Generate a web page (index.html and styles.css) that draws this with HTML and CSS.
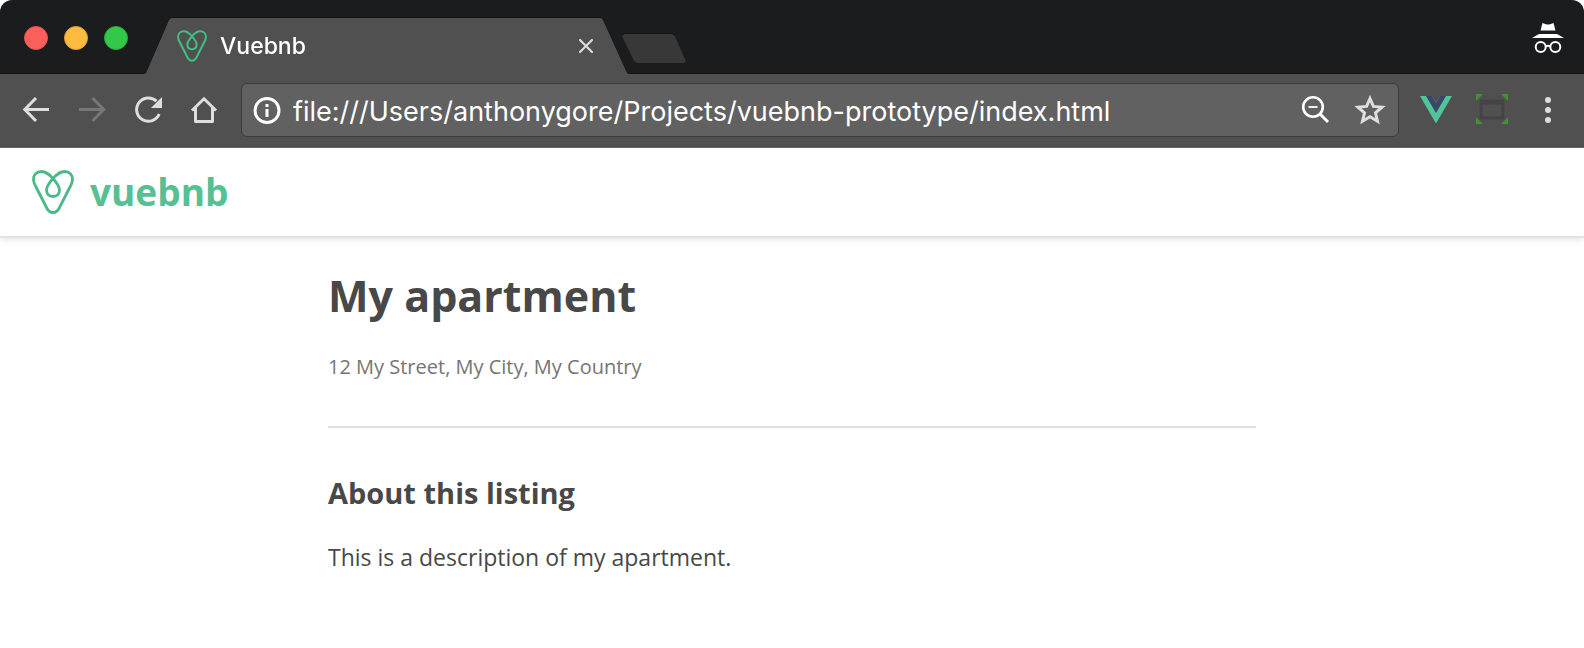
FILE: index.html
```html
<!DOCTYPE html>
<html lang="en">
<head>
<meta charset="utf-8">
<title>Vuebnb</title>
<link rel="stylesheet" href="styles.css">
</head>
<body>
<svg class="symbols" aria-hidden="true">
  <symbol id="heart" viewBox="0 0 42 44">
    <path d="M21 8.500C17 4 13 1.500 9.500 1.500C4.500 1.500 1.500 5 1.500 9.500C1.500 11.500 2 13 3 15L15 38.500C16.500 41.300 18.500 42.500 21 42.500C23.500 42.500 25.500 41.300 27 38.500L39 15C40 13 40.500 11.500 40.500 9.500C40.500 5 37.500 1.500 32.500 1.500C29 1.500 25 4 21 8.500C17 13 14.500 16.500 14.500 20C14.500 24 17 26.500 21 26.500C25 26.500 27.500 24 27.500 20C27.500 16.500 25 13 21 8.500Z" fill="none" stroke="currentColor" stroke-width="2.800"/>
  </symbol>
</svg>
<div class="window">
  <div class="tab-strip">
    <div class="lights">
      <button class="light light-close" aria-label="Close window"></button>
      <button class="light light-min" aria-label="Minimize window"></button>
      <button class="light light-max" aria-label="Maximize window"></button>
    </div>
    <div class="tabs">
      <div class="tab">
        <svg class="favicon" aria-hidden="true"><use href="#heart"/></svg>
        <span class="tab-title">Vuebnb</span>
        <button class="tab-close" aria-label="Close tab">
          <svg width="16" height="16" viewBox="0 0 16 16"><path d="M2 2L14 14M14 2L2 14" stroke="#dcdcdc" stroke-width="2.200" stroke-linecap="round"/></svg>
        </button>
      </div>
      <button class="new-tab" aria-label="New tab"></button>
    </div>
    <svg class="incognito" width="32" height="32" viewBox="0 0 32 32" role="img" aria-label="Incognito">
      <path d="M10.500 1L14 2.300Q16 2.800 18 2.300L21.500 1L23.500 8.500H8.500Z M7 12H25L32 16H0Z" fill="#fff"/>
      <g fill="none" stroke="#fff" stroke-width="2"><circle cx="8.700" cy="25" r="5"/><circle cx="23.300" cy="25" r="5"/><path d="M13.500 24.500Q16 22.800 18.500 24.500"/></g>
    </svg>
  </div>
  <div class="toolbar">
    <div class="nav">
      <button class="tool" aria-label="Back"><svg viewBox="0 0 32 32"><path d="M16 4L4.800 15.500L16 27M5 15.500H29"/></svg></button>
      <button class="tool tool-off" aria-label="Forward" disabled><svg viewBox="0 0 32 32"><path d="M16.500 4L27.700 15.500L16.500 27M27 15.500H3"/></svg></button>
      <button class="tool" aria-label="Reload"><svg viewBox="0 0 32 32"><path d="M24.500 7.200A11.700 11.700 0 1 0 27.200 20"/><path class="solid" d="M30 3V14H19Z"/></svg></button>
      <button class="tool" aria-label="Home"><svg viewBox="0 0 32 32"><path d="M4 16.500L16 4.800L28 16.500"/><path d="M7.500 14V27.500H24.500V14" stroke-linejoin="round"/></svg></button>
    </div>
    <div class="address">
      <svg class="info" width="28" height="28" viewBox="0 0 28 28" aria-hidden="true"><circle cx="14" cy="14.500" r="12" fill="none" stroke="#fff" stroke-width="3"/><path d="M12.500 8h3v3h-3zM12.500 13h3v8h-3z" fill="#fff"/></svg>
      <input class="url" type="text" aria-label="Address" value="file:///Users/anthonygore/Projects/vuebnb-prototype/index.html">
      <button class="tool" aria-label="Zoom out"><svg viewBox="0 0 32 32" class="white"><circle cx="15" cy="13" r="9.800" stroke-width="2.600"/><path d="M22 20L30 28"/><path d="M10.500 13H19.500" stroke-width="1.800"/></svg></button>
      <button class="tool" aria-label="Bookmark"><svg viewBox="0 0 32 32"><path d="M16 4.500L19.400 12.400L28 13.100L21.500 18.800L23.500 27.200L16 22.700L8.500 27.200L10.500 18.800L4 13.100L12.600 12.400Z"/></svg></button>
    </div>
    <div class="extensions">
      <button class="tool" aria-label="Vue devtools"><svg viewBox="0 0 32 32"><path d="M0 2H12L16 9L20 2H32L16 29.500Z" fill="#4fc598" stroke="none"/><path d="M6 2H12L16 9L20 2H26L16 19Z" fill="#3b4668" stroke="none"/></svg></button>
      <button class="tool" aria-label="Window resizer"><svg viewBox="0 0 32 32"><path d="M0 0H7L0 7ZM25 0H32V7ZM0 23L7 30H0ZM32 23V30H25Z" fill="#43902f" stroke="none"/><rect x="5" y="7" width="22" height="17" fill="#505050" stroke="#444"/><path d="M4 8.500H28" stroke="#444" stroke-width="4"/></svg></button>
      <button class="tool" aria-label="Menu"><svg viewBox="0 0 32 32"><g fill="#dedede" stroke="none"><circle cx="16" cy="6" r="3"/><circle cx="16" cy="16" r="3"/><circle cx="16" cy="26" r="3"/></g></svg></button>
    </div>
  </div>
  <header class="site-header">
    <a class="brand" href="#"><svg class="logo" aria-hidden="true"><use href="#heart"/></svg><span>vuebnb</span></a>
  </header>
  <main class="container">
    <div class="heading">
      <h1>My apartment</h1>
      <p>12 My Street, My City, My Country</p>
    </div>
    <hr>
    <section class="about">
      <h3>About this listing</h3>
      <p>This is a description of my apartment.</p>
    </section>
  </main>
</div>
</body>
</html>
```
FILE: styles.css
```css
* { box-sizing: border-box; }

body {
  margin: 0;
  background: #fff;
  color: #484848;
  font-family: "Open Sans", sans-serif;
}

button {
  margin: 0;
  padding: 0;
  border: 0;
  background: none;
}

svg { display: block; }

.symbols { position: absolute; width: 0; height: 0; }

.window {
  min-height: 100vh;
  border-radius: 12px 12px 0 0;
  overflow: hidden;
}

.tab-strip {
  display: flex;
  height: 74px;
  background: #1b1c1e;
  border-bottom: 1px solid #121314;
}

.lights {
  display: flex;
  align-items: center;
  gap: 16px;
  padding: 2px 16px 0 24px;
}

.light { width: 24px; height: 24px; border-radius: 50%; }
.light-close { background: #fc605c; border: 1px solid #e2504b; }
.light-min { background: #fdbc40; border: 1px solid #dfa033; }
.light-max { background: #34c84a; border: 1px solid #27aa35; }

.tabs {
  display: flex;
  flex: 1;
  align-items: flex-end;
  margin-bottom: -1px;
  filter: drop-shadow(0 -1px 0 #111214);
}

.tab {
  display: flex;
  align-items: center;
  width: 485px;
  height: 56px;
  padding: 0 35px 0 33px;
  background: #505050;
  clip-path: polygon(0 100%, 2px 98%, 25px 2px, 27px 0, 457px 0, 459px 2px, 483px 98%, 485px 100%);
}

.favicon { width: 30px; height: 32px; color: #3fbf86; }

.tab-title {
  flex: 1;
  margin-left: 13px;
  color: #fff;
  font: 500 23px/32px Inter, sans-serif;
}

.new-tab {
  width: 64px;
  height: 29px;
  margin: 0 0 11px -7px;
  background: #383838;
  clip-path: polygon(0 2px, 2px 0, 50px 0, 53px 2px, 64px 27px, 62px 100%, 15px 100%, 12px 27px);
}

.incognito { margin: 22px 20px 0 0; }

.toolbar {
  display: flex;
  align-items: center;
  gap: 21px;
  height: 74px;
  padding: 0 20px 2px;
  background: #505050;
  border-bottom: 1px solid #676767;
}

.nav { display: flex; gap: 24px; }
.extensions { display: flex; gap: 24px; }

.tool { width: 32px; height: 32px; }

.tool svg {
  width: 32px;
  height: 32px;
  fill: none;
  stroke: #dedede;
  stroke-width: 3;
}

.tool .white { stroke: #fff; }
.tool .solid { fill: #dedede; stroke: none; }
.tool-off svg { stroke: #777; }

.address {
  display: flex;
  flex: 1;
  align-items: center;
  gap: 24px;
  min-width: 0;
  height: 54px;
  padding: 0 12px 0 11px;
  background: #616161;
  border: 1px solid #3c3c3c;
  border-radius: 6px;
}

.url {
  flex: 1;
  min-width: 0;
  height: 44px;
  margin-left: -12px;
  padding: 4px 0 0;
  border: 0;
  outline: 0;
  background: none;
  color: #fff;
  font: 400 27px/40px Inter, sans-serif;
}

.site-header {
  display: flex;
  align-items: center;
  height: 90px;
  padding: 0 32px;
  border-bottom: 2px solid #e2e2e2;
  box-shadow: 0 2px 6px rgba(0, 0, 0, 0.1);
}

.brand {
  display: flex;
  align-items: center;
  gap: 16px;
  color: #56c092;
  font-size: 37px;
  font-weight: 700;
  line-height: 52px;
  text-decoration: none;
}

.logo { width: 42px; height: 44px; color: #49ba87; }

.container {
  max-width: 976px;
  margin: 0 auto;
  padding: 27px 24px;
}

h1, h3, p { margin: 0; }

h1 { font-size: 43px; line-height: 62px; }

.heading p {
  margin-top: 26px;
  color: #757575;
  font-size: 20px;
  line-height: 28px;
}

hr {
  height: 2px;
  margin: 45px 0;
  border: 0;
  background: #dce0e0;
}

h3 { font-size: 29px; line-height: 40px; }

.about p {
  margin-top: 28px;
  font-size: 23px;
  line-height: 32px;
}
```
